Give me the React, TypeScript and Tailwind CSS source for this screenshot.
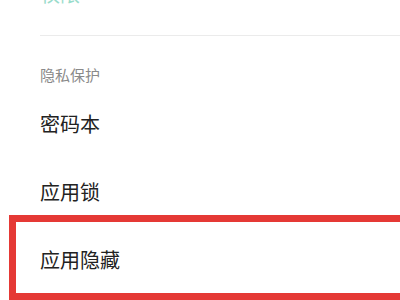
export default function App() {
  const font = { fontFamily: '"Noto Sans CJK SC", "Noto Sans", sans-serif' }
  return (
    <div className="w-[400px] h-[300px] overflow-hidden bg-white" style={font}>
      {/* cut-off item at the top */}
      <div className="h-[35px] pl-[40px] overflow-hidden">
        <div className="-mt-[16px] text-[20px] leading-[20px] text-[#9adccb]">权限</div>
      </div>
      <div className="ml-[40px] h-px bg-[#ebebeb]" />

      <div className="pl-[40px] pt-[31px] pb-[8px] text-[15px] leading-[15px] text-[#8a8a8a]">
        隐私保护
      </div>

      <div className="h-[68px] pl-[40px] flex items-center text-[20px] text-[#222]">密码本</div>

      <div className="pl-[40px] pt-[24px] pb-[13px] text-[20px] leading-[20px] text-[#222]">应用锁</div>

      <div className="ml-[9px] -mr-[20px] border-[7px] border-[#e53935] pl-[24px] pt-[28px] pb-[23px]">
        <div className="text-[20px] leading-[20px] text-[#222]">应用隐藏</div>
      </div>
    </div>
  )
}
